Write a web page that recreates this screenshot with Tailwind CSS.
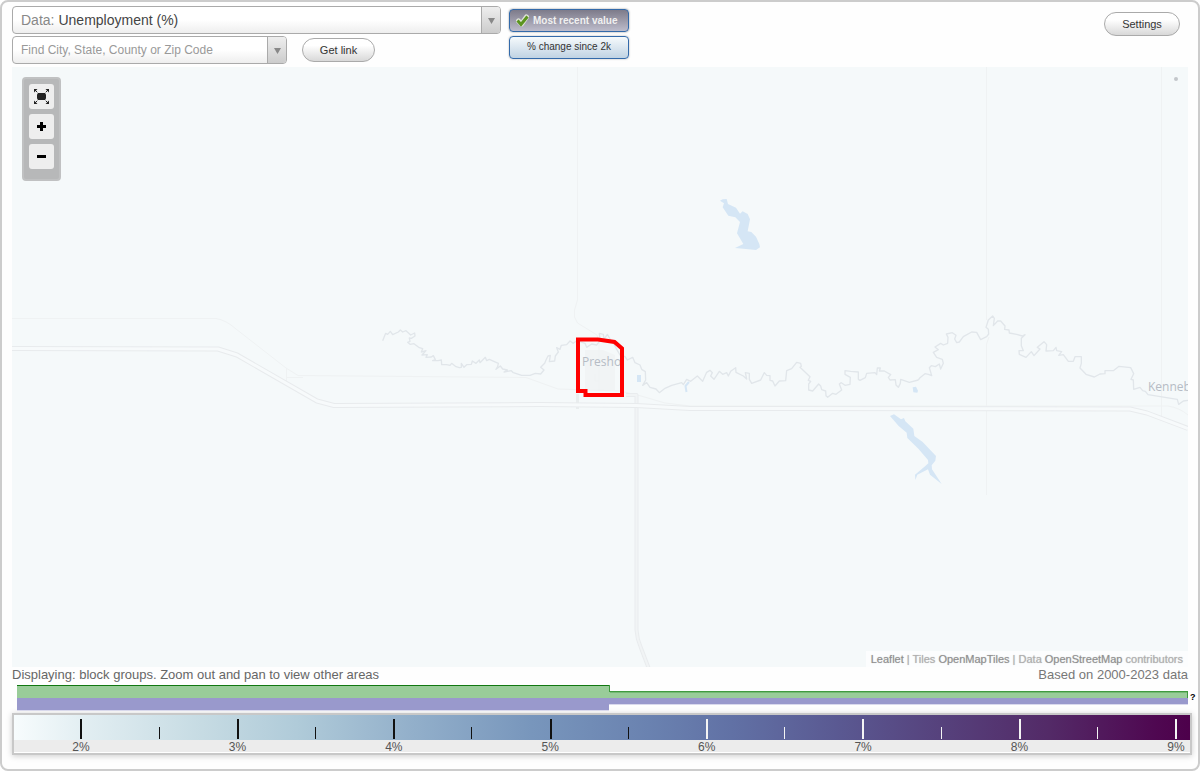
<!DOCTYPE html>
<html lang="en">
<head>
  <meta charset="UTF-8" />
  <meta name="viewport" content="width=device-width, initial-scale=1.0"/>
  <title>Unemployment (%) map</title>
  <script src="https://cdn.jsdelivr.net/npm/@tailwindcss/browser@4"></script>
</head>
<body class="bg-white font-['Liberation_Sans',Arial,sans-serif] text-[#333]">
  <div class="border-2 border-[#ccc] rounded-lg px-2.5 pt-1 pb-3.5 min-h-screen bg-[#fefefe]">

    <!-- toolbar -->
    <header class="flex items-start h-[61px]">
      <div class="w-[489px] space-y-0.5">
        <div class="flex items-stretch h-7 rounded border border-[#aaa] bg-linear-to-b from-white from-50% to-[#eee] overflow-hidden">
          <label for="dataSelect" class="pl-2 text-sm leading-[26px] text-[#888]">Data:</label>
          <select id="dataSelect" class="flex-1 appearance-none bg-transparent pl-1 text-sm leading-[26px] text-[#444] focus:outline-none">
            <option>Unemployment (%)</option>
          </select>
          <span class="w-[19px] border-l border-[#aaa] bg-linear-to-b from-[#eee] to-[#ccc] flex items-center justify-center">
            <svg class="w-[7px] h-[6px] mt-0.5" viewBox="0 0 7 6"><path d="M0 0h7L3.5 6z" fill="#888"/></svg>
          </span>
        </div>
        <div class="flex items-center">
          <div class="flex items-stretch w-[275px] h-7 rounded border border-[#aaa] bg-linear-to-b from-white from-50% to-[#eee] overflow-hidden">
            <input id="placeInput" type="text" aria-label="Find City, State, County or Zip Code" placeholder="Find City, State, County or Zip Code" class="flex-1 min-w-0 bg-transparent pl-2 text-xs placeholder:text-[#999] focus:outline-none" />
            <button aria-label="Show places" class="w-[19px] border-l border-[#aaa] bg-linear-to-b from-[#eee] to-[#ccc] flex items-center justify-center">
              <svg class="w-[7px] h-[6px] mt-0.5" viewBox="0 0 7 6"><path d="M0 0h7L3.5 6z" fill="#888"/></svg>
            </button>
          </div>
          <button class="ml-[15px] w-[73px] h-6 rounded-full border border-[#aaa] bg-linear-to-b from-white from-30% to-[#d8d8d8] text-[11px]">Get link</button>
        </div>
      </div>

      <div class="ml-2 mt-[3px] w-[120px] space-y-1">
        <button class="flex items-center w-full h-[23px] rounded border border-[#336aaa] bg-linear-to-b from-[#7d7b8a] to-[#bdbccb] shadow-[0_0_2px_#888] pl-1.5 text-[10px] font-bold text-[#f0f0f0]">
          <svg class="w-[13px] h-[13px] mr-1" viewBox="0 0 13 13">
            <path d="M2.500 7l3 3L10.500 3" fill="none" stroke="#dfe2da" stroke-width="5" stroke-linejoin="round" stroke-linecap="round"/>
            <path d="M1.500 6.500l3.500 4L11.500 2.500" fill="none" stroke="#5c9420" stroke-width="3"/>
          </svg>
          Most recent value
        </button>
        <button class="block w-full h-[23px] rounded border border-[#336aaa] bg-linear-to-b from-[#f6fafc] to-[#c0d3e3] shadow-[0_0_2px_#aaa] text-[10px] leading-[19px] pb-0.5">% change since 2k</button>
      </div>

      <button class="ml-auto mr-2 mt-1.5 w-[76px] h-6 rounded-full border border-[#aaa] bg-linear-to-b from-white from-30% to-[#d8d8d8] text-[11px]">Settings</button>
    </header>

    <!-- map -->
    <main class="relative h-[600px] bg-[#f5f9fa] overflow-hidden">
      <svg class="w-full h-full" viewBox="12 67 1176 600" preserveAspectRatio="xMidYMid slice" fill="none" stroke-linejoin="round">
        <!-- town area -->
        <path d="M585 350h18l12 5v35h-30z" fill="#f1f4f5"/>

        <!-- minor roads -->
        <g stroke="#eff2f3">
          <path d="M577.500 67V300L574.500 310V317L577.500 323L597 335L599 343V391M595 374V381H599"/>
          <path d="M986.500 67V320M989 337L986.500 344V495M1161.500 67V421"/>
          <path d="M12 318.500H216Q226 320 236 329L286 368L298 375.500L526 377.500L558 389L620 391L641 396L665 403L690 406H1168Q1180 408 1188 415"/>
          <path d="M286.500 368V381M286 377.500H303"/>
        </g>
        <path d="M577.500 394V409" stroke="#e9edee" stroke-width="3"/>

        <!-- highways -->
        <path d="M626 395H636.500V630Q637 639 641 648L649 669" stroke="#e9ecee" stroke-width="4"/>
        <path d="M626 395H636.500V630Q637 639 641 648L649 669" stroke="#f1f4f5" stroke-width="2"/>
        <path d="M12 348.500L218 349L237 355L317 401L334 405.500L540 404.500L636 405.500L690 408.500L1130 409L1147 413L1188 428.500" stroke="#e8ebed" stroke-width="5"/>
        <path d="M12 348.500L218 349L237 355L317 401L334 405.500L540 404.500L636 405.500L690 408.500L1130 409L1147 413L1188 428.500" stroke="#f7fafb" stroke-width="3"/>

        <!-- creek, west to east -->
        <g stroke="#e1e6ea" stroke-width="4">
          <path transform="translate(370 310) scale(.333333)" d="M38 92L47 70L53 73L61 64L68 74L85 66L91 60L98 66L108 62L122 75L134 69L135 78L124 85L118 84L120 94L113 97L120 103L132 101L140 107L148 113L158 116L154 126L168 122L156 135L172 134L168 142L184 141L190 137L196 149L188 152L204 152L214 150L215 164L230 164L240 166L245 160L258 170L268 173L274 172L274 160L282 172L290 164L304 163L307 153L318 160L328 150L330 158L346 142L350 152L358 148L385 160L383 170L378 178L391 168L398 177L412 180L402 186L424 182L430 188L455 196L480 196L496 190L512 192L522 180L512 172L524 160L528 150L534 138L541 136L538 155L554 153L556 138L565 126L560 113L570 118L574 106L590 104L600 93L610 100L618 94L630 95"/>
          <path transform="translate(540 300) scale(.333333)" d="M120 125L135 130L140 142L155 132L170 135L180 122L178 100L190 103L192 118L202 103L212 120L220 130L240 165L255 170L262 180L278 172L285 188L300 195L305 208L316 215L317 240L308 256L320 248L330 262L348 267L358 278L375 265"/>
          <path transform="translate(640 340) scale(.333333)" d="M75 145L95 136L125 128L130 134L140 118L152 124L172 108L188 124L200 97L210 91L217 98L212 108L222 118L238 94L248 103L260 98L265 108L272 94L287 83L288 97L310 108L320 117L316 98L328 100L328 118L335 130L362 120L373 98L380 106L390 107L390 121L398 123L405 138L418 123L437 122L440 92L455 86L470 67L482 70L484 79L480 82L510 110L505 121L512 124L506 132L506 150L518 153L536 132L542 138L545 149L557 153L558 167L563 172L578 160L588 163L605 150L598 132L604 128L615 136L630 133L631 112L615 103L615 92L632 94L655 96L655 118L660 121L676 113L680 100L705 98L710 104L712 84L721 84L718 93L733 93L752 104L745 112L750 120L766 119L768 135L775 142L781 130L782 118L808 127L835 120"/>
          <path transform="translate(920 300) scale(.333333)" d="M-5 240L0 233L15 221L25 223L35 227L28 203L34 197L46 200L58 192L62 207L70 190L67 178L50 172L40 157L55 149L45 141L62 130L70 135L83 130L84 112L79 102L97 98L108 106L104 117L110 128L118 126L130 110L155 96L170 97L182 119L200 110L206 102L205 88L198 82L205 60L218 48L223 55L220 77L233 63L242 63L255 78L254 88L267 90L268 99L290 103L307 108L315 104L304 115L304 137L310 152L297 152L298 163L318 172L334 155L342 167L360 147L352 142L372 125L380 134L378 153L400 152L408 142L410 152L425 155L416 166L430 164L445 184L460 184L465 170L484 170L484 190L480 204L498 223L523 231L540 222L555 221L555 212L580 212L597 199L632 203L641 221L633 238L640 240L641 268L660 262L668 272L676 274L684 284L772 298L776 313L790 303L804 301"/>
        </g>

        <!-- lakes -->
        <g fill="#d5e6f5">
          <path transform="translate(700 180) scale(.333333)" d="M60 62L68 58L80 57L84 72L108 83L120 101L128 94L143 102L150 118L143 154L154 156L168 170L178 192L180 202L168 210L130 206L105 204L130 192L111 160L120 126L106 112L85 107L68 82L72 70ZM570 708L582 703L603 718L612 714L616 724L640 746L643 768L668 786L708 828L706 842L695 856L696 868L725 912L690 884L684 868L652 884L646 900L645 884L676 858L685 850L684 840L655 806L622 774L620 758L596 738ZM638 622L648 620L654 632L652 638L640 637Z"/>
          <path d="M637 375h4v7h-4z"/>
          <path d="M689 382L685.500 386L686.500 392" fill="none" stroke="#d5e6f5" stroke-width="2"/>
        </g>

        <g class="font-['Open_Sans',sans-serif] text-xs" fill="#b6bcc5">
          <text x="582" y="366">Presho</text>
          <text x="1148" y="391">Kenneb</text>
        </g>
        <circle cx="1176" cy="79" r="2" fill="#c3c7ca"/>

        <!-- selected block group -->
        <path d="M578 339.500L598 339.500L614.500 342L622 348.500V395H585.500V391H578Z" stroke="#f00" stroke-width="4" stroke-linejoin="miter"/>
      </svg>

      <div class="absolute left-2.5 top-2.5 flex flex-col gap-[5px] rounded-sm border-2 border-[#c0c1c2] bg-[#b7b8b9] p-[5px] pb-2.5">
        <button aria-label="Full extent" class="w-[25px] h-[25px] rounded-[3px] bg-[#eee] flex items-center justify-center">
          <svg class="w-[15px] h-[15px]" viewBox="0 0 15 15" fill="#222" stroke="#222">
            <path d="M0 0h3.500L0 3.500zM15 0v3.500L11.500 0zM0 15v-3.500L3.500 15zM15 15h-3.500L15 11.500z" stroke="none"/>
            <path d="M1 1l4 4M14 1l-4 4M1 14l4-4M14 14l-4-4" stroke-dasharray="3 1"/>
            <rect x="3" y="4" width="9" height="7" rx="2" stroke="none"/>
          </svg>
        </button>
        <button aria-label="Zoom in" class="w-[25px] h-[25px] rounded-[3px] bg-[#eee] flex items-center justify-center">
          <svg class="w-[9px] h-[9px]" viewBox="0 0 9 9"><path d="M3 0h3v3h3v3H6v3H3V6H0V3h3z" fill="#000"/></svg>
        </button>
        <button aria-label="Zoom out" class="w-[25px] h-[25px] rounded-[3px] bg-[#eee] flex items-center justify-center">
          <svg class="w-[9px] h-[9px]" viewBox="0 0 9 9"><path d="M0 3h9v3H0z" fill="#000"/></svg>
        </button>
      </div>

      <div class="absolute right-0 bottom-0 h-4 px-[5px] bg-white/70 text-[11px] leading-4 text-[#b0b0b0] [text-shadow:0_0_1px_#bbb]">
        <a href="#" class="text-[#909090]">Leaflet</a> | Tiles <a href="#" class="text-[#909090]">OpenMapTiles</a> | Data <a href="#" class="text-[#909090]">OpenStreetMap</a> contributors
      </div>
    </main>

    <div class="flex justify-between h-[18px] text-[13px] leading-4 text-[#666]">
      <p>Displaying: block groups. Zoom out and pan to view other areas</p>
      <p class="text-[#777]">Based on 2000-2023 data</p>
    </div>

    <!-- range of values -->
    <div class="flex h-7 ml-[5px] -mr-2">
      <svg class="flex-1 min-w-0 h-[26px]" viewBox="0 0 1171 26" preserveAspectRatio="none">
        <path d="M0 0h592v6h579v7H0z" fill="#99cc99"/>
        <path d="M0 13h1171v6H592v6H0z" fill="#9999cc"/>
        <path d="M0 25h592v1H0zM592 19h579v1H592z" fill="#d9d9ec"/>
        <path d="M0 0h592v1H0z" fill="#117711"/>
        <path d="M592 0h1v6h578v1H592zM1170 6h1v7h-1z" fill="#3f9a3f"/>
        <path d="M593 7h577v1H593z" fill="#74b874"/>
      </svg>
      <a href="#" class="w-2 pl-0.5 pt-1.5 text-[9px] leading-3 font-bold text-black">?</a>
    </div>

    <!-- colour scale -->
    <div class="-mr-1 border-2 border-[#c8c8c8] bg-white pb-px shadow-[0_1px_6px_#ccc]">
      <div class="h-[25px] bg-[linear-gradient(90deg,#f7fcfd_0%,#e2eef2_6%,#c6dbe3_16%,#b0cbd9_24%,#92afca_34%,#7896bc_44%,#6a82b0_54%,#6171a5_61%,#5a5992_70%,#56417c_79%,#532a67_88%,#4f0851_97%,#4d004b_100%)]">
        <svg class="w-full h-full" shape-rendering="crispEdges">
          <g fill="#111">
            <rect x="5.610%" y="4" width="2" height="20"/>
            <rect x="12.330%" y="12" width="1" height="12"/>
            <rect x="18.960%" y="4" width="2" height="20"/>
            <rect x="25.600%" y="12" width="1" height="12"/>
            <rect x="32.230%" y="4" width="2" height="20"/>
            <rect x="38.860%" y="12" width="1" height="12"/>
            <rect x="45.580%" y="4" width="2" height="20"/>
            <rect x="52.210%" y="12" width="1" height="12"/>
          </g>
          <g fill="#f4f4f4">
            <rect x="58.840%" y="4" width="2" height="20"/>
            <rect x="65.480%" y="12" width="1" height="12"/>
            <rect x="72.110%" y="4" width="2" height="20"/>
            <rect x="78.830%" y="12" width="1" height="12"/>
            <rect x="85.460%" y="4" width="2" height="20"/>
            <rect x="92.090%" y="12" width="1" height="12"/>
            <rect x="98.720%" y="4" width="2" height="20"/>
          </g>
        </svg>
      </div>
      <svg class="block w-full h-3 overflow-visible bg-[#ececec] text-xs" fill="#555" text-anchor="middle">
        <text x="5.700%" y="11">2%</text>
        <text x="19%" y="11">3%</text>
        <text x="32.300%" y="11">4%</text>
        <text x="45.600%" y="11">5%</text>
        <text x="58.900%" y="11">6%</text>
        <text x="72.200%" y="11">7%</text>
        <text x="85.500%" y="11">8%</text>
        <text x="98.800%" y="11">9%</text>
      </svg>
    </div>
  </div>
</body>
</html>
